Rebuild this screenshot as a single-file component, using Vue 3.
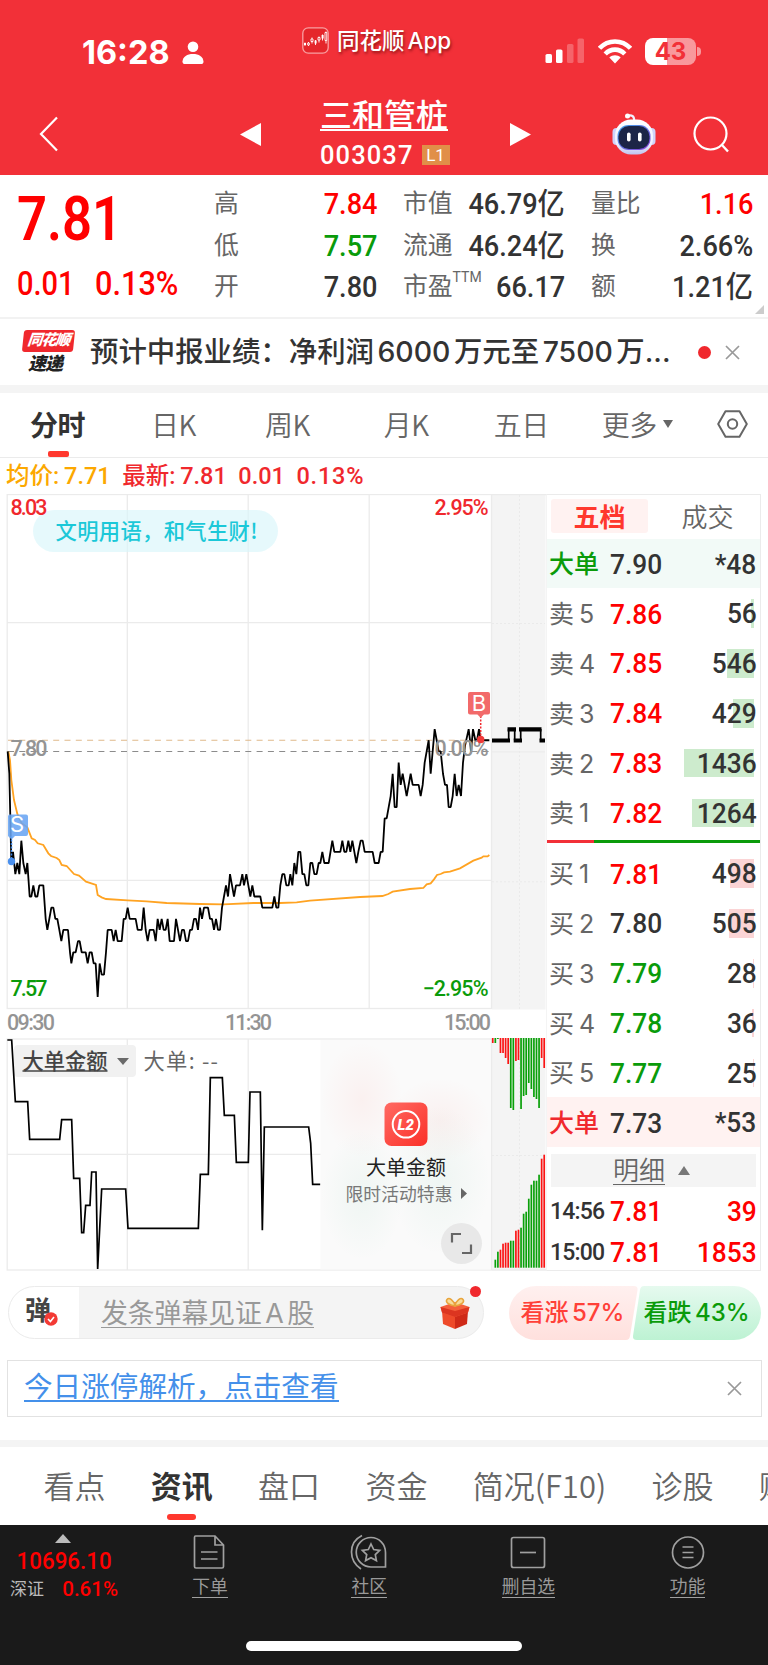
<template>
  <div class="phone">
    <header class="header">
      <div class="status-bar">
        <span class="clock">16:28</span>
        <svg class="person" width="22" height="24" viewBox="0 0 22 24">
          <circle cx="11" cy="5.8" r="5.3" fill="#fff" />
          <path d="M0.5 20.5C1 15.500 5 13 11 13s10 2.500 10.500 7.500c0 2-1 2.500-2.500 2.500H3c-1.500 0-2.500-.5-2.500-2.500z" fill="#fff" />
        </svg>
        <div class="app-badge">
          <svg width="27" height="27" viewBox="0 0 27 27">
            <rect x="0.8" y="0.8" width="25.400" height="25.400" rx="5.500" fill="#e5262b" stroke="#f9a0a2" stroke-width="1.300" />
            <g stroke="#fff" stroke-width="0.9" fill="none">
              <path d="M3 15.500v3M6.500 15v4M10 10.500v6M13.500 13v5M17 9.500v6M20.500 7.500v6M24 4.500v12" />
              <path d="M5.700 16h1.600v2H5.700zM9 12h2v2.500H9zM16 10.500h2v2.500h-2zM23 5.500h1.800v8H23z" fill="#e5262b" />
            </g>
            <path d="M2 16h2v2.300H2zM12.600 13.500h2v3h-2zM19.600 8h2v3.500h-2z" fill="#fff" />
          </svg>
          <span>同花顺 App</span>
        </div>
        <svg class="signal" width="40" height="26" viewBox="0 0 40 26">
          <rect x="0.500" y="16" width="6.500" height="9" rx="1.600" fill="#fff" />
          <rect x="11" y="11.500" width="6.500" height="13.500" rx="1.600" fill="#fff" />
          <rect x="22" y="6" width="6.500" height="19" rx="1.600" fill="#fff" opacity=".25" />
          <rect x="32.500" y="0.500" width="6.500" height="24.500" rx="1.600" fill="#fff" opacity=".25" />
        </svg>
        <svg class="wifi" width="34" height="25" viewBox="0 0 34 25">
          <g fill="none" stroke="#fff" stroke-width="4.600">
            <path d="M1.500 9.300C10 0.200 24 0.200 32.500 9.300" />
            <path d="M7.200 15C12.800 9.200 21.200 9.200 26.800 15" />
          </g>
          <path d="M11.300 18.600c3.200-3 8.200-3 11.400 0L17 24.500z" fill="#fff" />
        </svg>
        <div class="battery"><span>43</span></div>
      </div>

      <div class="title-bar">
        <svg class="back" width="20" height="36" viewBox="0 0 20 36">
          <path d="M18 1.500L2 18l16 16.500" fill="none" stroke="#fff" stroke-width="2.200" />
        </svg>
        <svg class="prev" width="21" height="23" viewBox="0 0 21 23"><path d="M21 0v23L0 11.500z" fill="#fff" /></svg>
        <div class="stock">
          <div class="stock-name">三和管桩</div>
          <div class="stock-code"><span>003037</span><i>L1</i></div>
        </div>
        <svg class="next" width="21" height="23" viewBox="0 0 21 23"><path d="M0 0v23l21-11.500z" fill="#fff" /></svg>
        <svg class="robot" width="44" height="42" viewBox="0 0 44 42">
          <defs>
            <linearGradient id="shell" x1="0" y1="0" x2="0" y2="1">
              <stop offset="0" stop-color="#fff" />
              <stop offset=".7" stop-color="#eef0ff" />
              <stop offset="1" stop-color="#bfc3ee" />
            </linearGradient>
            <linearGradient id="visor" x1="0" y1="0" x2="1" y2="1">
              <stop offset="0" stop-color="#3ea5e8" />
              <stop offset="1" stop-color="#8a3fd8" />
            </linearGradient>
          </defs>
          <path d="M16 2.500c4-.8 6.500.5 6.200 6" fill="none" stroke="#f1f1ff" stroke-width="2.200" />
          <circle cx="15.500" cy="3" r="2.500" fill="#fff" />
          <rect x="0.500" y="15" width="8" height="17" rx="4" fill="#cfd3fa" />
          <rect x="35.500" y="15" width="8" height="17" rx="4" fill="#cfd3fa" />
          <rect x="3" y="6.500" width="38" height="35" rx="16" fill="url(#shell)" />
          <rect x="5.500" y="12" width="33" height="25" rx="11" fill="url(#visor)" />
          <rect x="6.500" y="13" width="31" height="23" rx="10.500" fill="#1c2547" />
          <rect x="15" y="19.500" width="3.600" height="9" rx="1.800" fill="#fff" />
          <rect x="26" y="19.500" width="3.600" height="9" rx="1.800" fill="#fff" />
        </svg>
        <svg class="search" width="37" height="37" viewBox="0 0 37 37">
          <circle cx="17.500" cy="17.500" r="16" fill="none" stroke="#fff" stroke-width="2.200" />
          <path d="M28.500 28.500l6.500 7" stroke="#fff" stroke-width="2.400" />
        </svg>
      </div>
    </header>

    <section class="quote">
      <div class="price">
        <div class="last"><span>7.81</span></div>
        <div class="change"><span>0.01</span><span class="rate">0.13%</span></div>
      </div>
      <div class="stats">
        <template v-for="s in stats" :key="s.label">
          <span class="stat-label">{{ s.label }}<sup v-if="s.sup">{{ s.sup }}</sup></span>
          <span class="stat-value" :class="s.tone"><b>{{ s.value }}</b></span>
        </template>
      </div>
      <i class="corner"></i>
    </section>

    <section class="news">
      <div class="news-logo">
        <span class="logo-top">同花顺</span>
        <span class="logo-bottom">速递</span>
      </div>
      <span class="news-text">预计中报业绩：净利润 6000 万元至 7500 万...</span>
      <i class="news-dot"></i>
      <svg width="15" height="15" viewBox="0 0 15 15"><path d="M1 1l13 13M14 1L1 14" stroke="#999" stroke-width="1.700" /></svg>
    </section>

    <nav class="period-tabs">
      <span v-for="t in periods" :key="t" :class="{ active: t === '分时' }">{{ t }}</span>
      <i class="caret"></i>
      <svg class="hex" width="31" height="28" viewBox="0 0 31 28">
        <path d="M8.500 1.200h14L29.800 14l-7.300 12.800h-14L1.200 14z" fill="none" stroke="#666" stroke-width="2" stroke-linejoin="round" />
        <circle cx="15.500" cy="14" r="4.700" fill="none" stroke="#666" stroke-width="2" />
      </svg>
    </nav>

    <div class="legend">
      <span class="avg">均价: 7.71</span>
      <span>最新: 7.81</span>
      <span>0.01</span>
      <span class="rate">0.13%</span>
    </div>

    <main class="board">
      <svg class="chart" width="546" height="778" viewBox="0 494 546 778">
        <defs>
          <radialGradient id="glowRed"><stop offset="0" stop-color="#ff5a50" stop-opacity=".06" /><stop offset="1" stop-color="#ff5a50" stop-opacity="0" /></radialGradient>
          <radialGradient id="glowGreen"><stop offset="0" stop-color="#40b080" stop-opacity=".06" /><stop offset="1" stop-color="#40b080" stop-opacity="0" /></radialGradient>
          <linearGradient id="l2" x1="0" y1="0" x2="1" y2="1"><stop offset="0" stop-color="#ff6a63" /><stop offset="1" stop-color="#fb3028" /></linearGradient>
        </defs>

        <!-- grid -->
        <rect x="492" y="494" width="53.500" height="515.500" fill="#f4f4f4" />
        <rect x="492" y="1038" width="53.500" height="232" fill="#f4f4f4" />
        <g stroke="#ebebeb" stroke-width="1.300" fill="none">
          <rect x="7.200" y="494.500" width="484.300" height="514" />
          <rect x="7.200" y="1039" width="484.300" height="231" />
          <path d="M127.300 494.500V1008.500M248.200 494.500V1008.500M369.200 494.500V1008.500M7 622.600H491M7 880.400H491" />
          <path d="M127.300 1039V1270M248.200 1039V1270M7 1154.400H321" />
          <path d="M492 494.500H547M492 1270H547M492 751.800H545" />
        </g>
        <path d="M519.500 495V1009M492 623.500H545M492 881.800H545M519.500 1039V1269M492 1155.500H545" stroke="#eaeaea" stroke-dasharray="2 2" fill="none" />

        <!-- greeting bubble -->
        <rect x="33" y="510" width="245" height="42" rx="21" fill="#d8f6fa" fill-opacity=".65" />
        <text x="55.500" y="539.200" class="cjk" font-size="21.300" font-weight="500" fill="#1bc8d8" textLength="202">文明用语，和气生财!</text>

        <!-- reference levels -->
        <path d="M8 740.300H491" stroke="#dfb98a" stroke-width="1.100" stroke-dasharray="6 5.300" />
        <path d="M8 751.500H491" stroke="#8c8c8c" stroke-width="1.100" stroke-dasharray="6 5.300" />

        <polyline :points="avgPoints" fill="none" stroke="#ffa322" stroke-width="1.800" />
        <polyline :points="pricePoints" fill="none" stroke="#000" stroke-width="1.800" stroke-linejoin="bevel" />
        <path d="M508.700 729V740.300M514.700 729V740.300M520.700 729V740.300M540.700 729V740.300" stroke="#000" stroke-width="1.700" />
        <path d="M492 740.500H510M507.500 729.300H516M513.700 740.500H522M519 729.300H541.500M539.500 740.500H545" stroke="#000" stroke-width="4.200" />

        <g class="num" font-size="21.500">
          <text x="10.500" y="514.600" fill="#f0282d" textLength="37">8.03</text>
          <text x="434.500" y="514.600" fill="#f0282d" textLength="54">2.95%</text>
          <text x="10.500" y="755.800" fill="#949494" textLength="37">7.80</text>
          <text x="434.500" y="755.800" fill="#949494" textLength="54">0.00%</text>
          <text x="10.500" y="996.300" fill="#0a9b0a" textLength="37">7.57</text>
          <text x="422.500" y="996.300" fill="#0a9b0a" textLength="66">−2.95%</text>
        </g>
        <g class="num time" font-size="21.500" fill="#949494">
          <text x="7" y="1030.300" textLength="48">09:30</text>
          <text x="225" y="1030.300" textLength="47">11:30</text>
          <text x="444" y="1030.300" textLength="47">15:00</text>
        </g>

        <!-- trade marks -->
        <path d="M11.500 836V861" stroke="#3d86e8" stroke-width="1.500" stroke-dasharray="2 1.500" />
        <circle cx="11.500" cy="861.500" r="3.700" fill="#4a90ee" />
        <path d="M9 814.500h17q2 0 2 2v17.500q0 2-2 2H15l-3.500 3.500L8 836V816z" fill="#69a5f2" fill-opacity=".88" />
        <text x="10" y="832.300" class="mark">S</text>
        <path d="M480.700 716V739" stroke="#f0282d" stroke-width="1.500" stroke-dasharray="2 1.500" />
        <circle cx="480.700" cy="739.500" r="3.700" fill="#f03a3a" />
        <path d="M470 692h18q2 0 2 2v18.500q0 2-2 2h-4l-3.300 3.300-3.300-3.300H470q-2 0-2-2V694q0-2 2-2z" fill="#f26a6a" />
        <text x="471.800" y="710.800" class="mark">B</text>

        <!-- big order panel -->
        <rect x="14" y="1045" width="122" height="32" rx="4" fill="#f1f1f1" />
        <text x="22.500" y="1069" class="cjk" font-size="21.300" font-weight="500" fill="#444" textLength="85">大单金额</text>
        <path d="M22.500 1071H107.500" stroke="#444" stroke-width="1.500" />
        <path d="M117 1058h12l-6 7z" fill="#6a6a6a" />
        <text x="143.500" y="1069" class="cjk" font-size="21.300" fill="#666" textLength="74.500">大单: --</text>
        <polyline :points="flowPoints" fill="none" stroke="#000" stroke-width="1.700" />

        <rect x="320.500" y="1040" width="170.500" height="229.500" fill="#fafafa" />
        <ellipse cx="362" cy="1100" rx="41" ry="58" fill="url(#glowRed)" />
        <ellipse cx="440" cy="1120" rx="50" ry="42" fill="url(#glowRed)" />
        <ellipse cx="362" cy="1195" rx="41" ry="65" fill="url(#glowGreen)" />
        <ellipse cx="440" cy="1180" rx="50" ry="75" fill="url(#glowGreen)" />
        <rect x="384.500" y="1102.500" width="43" height="43.500" rx="7" fill="url(#l2)" />
        <circle cx="406" cy="1124.300" r="13.300" fill="none" stroke="#fff" stroke-width="2" />
        <text x="397.500" y="1130" class="l2">L2</text>
        <text x="366" y="1174.800" class="cjk" font-size="20" fill="#222" textLength="80">大单金额</text>
        <text x="345.500" y="1201" class="cjk" font-size="17.800" fill="#777" textLength="107">限时活动特惠</text>
        <path d="M461 1188v11l6-5.500z" fill="#666" />
        <circle cx="461.500" cy="1243.500" r="20.500" fill="#e8e8e8" />
        <path d="M452 1242.500v-8.500h9M471 1244.500v8.500h-9" fill="none" stroke="#666" stroke-width="2.200" />

        <!-- closing auction bars -->
        <template v-for="(b, i) in bars" :key="i">
          <rect :x="491.900 + i * 2.573" y="1038" width="1.700" :height="b[1]" :fill="b[0] ? '#fb1414' : '#0aa00a'" />
          <rect :x="491.900 + i * 2.573" :y="1267.700 - b[2]" width="1.700" :height="b[2]" :fill="b[0] ? '#fb1414' : '#0aa00a'" />
        </template>
      </svg>

      <aside class="book">
        <div class="book-tabs"><span class="on">五档</span><span>成交</span></div>
        <div v-for="r in sells" :key="r.name" class="row" :class="{ 'big-sell': r.big }">
          <span class="name">{{ r.name }}</span>
          <span class="num-cell" :class="r.tone">{{ r.price }}</span>
          <span class="vol"><i :style="{ width: r.bar + 'px' }"></i><em>{{ r.vol }}</em></span>
        </div>
        <div class="ratio"><i></i></div>
        <div v-for="r in buys" :key="r.name" class="row buy" :class="{ 'big-buy': r.big }">
          <span class="name">{{ r.name }}</span>
          <span class="num-cell" :class="r.tone">{{ r.price }}</span>
          <span class="vol"><i :style="{ width: r.bar + 'px' }"></i><em>{{ r.vol }}</em></span>
        </div>
        <div class="detail"><span>明细</span><i></i></div>
        <div v-for="d in deals" :key="d.time" class="row deal">
          <span class="time-cell">{{ d.time }}</span>
          <span class="num-cell red">{{ d.price }}</span>
          <span class="vol red"><em>{{ d.vol }}</em></span>
        </div>
      </aside>
    </main>

    <section class="comment">
      <div class="comment-box">
        <div class="dan">
          弹
          <svg class="check" width="14" height="14" viewBox="0 0 14 14">
            <circle cx="7" cy="7" r="6.700" fill="#f33a34" />
            <path d="M4 7l2.400 2.500L10 5" fill="none" stroke="#fff" stroke-width="1.600" />
          </svg>
        </div>
        <span class="placeholder">发条弹幕见证 A 股</span>
        <svg class="gift" width="30" height="32" viewBox="0 0 30 32">
          <path d="M2 14l13 4.500V32L3 27z" fill="#ee4a2a" />
          <path d="M28 14l-13 4.500V32l12-5z" fill="#cf2a18" />
          <path d="M0.500 10L15 5l14.500 5L28 15.500 15 20 2 15.500z" fill="#f4603c" />
          <path d="M0.500 10L15 14l14.500-4L28 15.500 15 20 2 15.500z" fill="#dc3520" />
          <path d="M15 9C9 8 5 5 7 2.500S14 3 15 9zM15 9c6-1 10-4 8-6.500S16 3 15 9z" fill="#f8dc9a" stroke="#e8a43c" stroke-width="1.600" />
        </svg>
        <i class="gift-dot"></i>
      </div>
      <div class="vote">
        <svg width="252" height="54" viewBox="0 0 252 54">
          <defs>
            <linearGradient id="up" x1="0" y1="0" x2="0" y2="1"><stop offset="0" stop-color="#fff0ef" /><stop offset="1" stop-color="#ffe0dd" /></linearGradient>
            <linearGradient id="down" x1="0" y1="0" x2="0" y2="1"><stop offset="0" stop-color="#e6faef" /><stop offset="1" stop-color="#bdf2d3" /></linearGradient>
          </defs>
          <path d="M27 0H125q4 0 3.500 4L121 50q-.6 4-4 4H27a27 27 0 010-54z" fill="url(#up)" />
          <path d="M135 0h90a27 27 0 010 54H128q-4.500 0-4-4l7-46q.6-4 4-4z" fill="url(#down)" />
        </svg>
        <span class="bull">看涨 57%</span>
        <span class="bear">看跌 43%</span>
      </div>
    </section>

    <section class="notice">
      <a>今日涨停解析，点击查看</a>
      <svg width="15" height="15" viewBox="0 0 15 15"><path d="M1 1l13 13M14 1L1 14" stroke="#999" stroke-width="1.700" /></svg>
    </section>

    <nav class="info-tabs">
      <span v-for="t in infos" :key="t" :class="{ active: t === '资讯' }">{{ t }}</span>
    </nav>

    <footer class="footer">
      <div class="index">
        <i></i>
        <b>10696.10</b>
        <p><span>深证</span><em>0.61%</em></p>
      </div>
      <div class="tool">
        <svg width="36" height="36" viewBox="0 0 36 36">
          <path d="M3.500 2h19.500l8.500 9v21.500q0 1.500-1.500 1.500h-26q-1.500 0-1.500-1.500v-29q0-1.500 1-1.500zM23 2v9h8.500M9 18h16.500M9 25h16.500" />
        </svg>
        <span>下单</span>
      </div>
      <div class="tool">
        <svg width="38" height="36" viewBox="0 0 38 36">
          <path d="M12 1.500C5 5 1.500 11 1.500 18S5 31 11 35" />
          <path d="M21 3.500a14.500 14.500 0 1 0 0 29.500h14.500V18.500C35.500 10 29 3.500 21 3.500z" />
          <path d="M21 10l2.700 5.500 6 .9-4.400 4.200 1.100 6L21 23.700l-5.400 2.900 1.100-6-4.400-4.200 6-.9z" />
        </svg>
        <span>社区</span>
      </div>
      <div class="tool">
        <svg width="36" height="36" viewBox="0 0 36 36"><rect x="1.500" y="3.500" width="33" height="30" rx="2" /><path d="M10 18.500h16" /></svg>
        <span>删自选</span>
      </div>
      <div class="tool">
        <svg width="36" height="36" viewBox="0 0 36 36"><circle cx="18" cy="18.500" r="15.500" /><path d="M12.500 13h11M12.500 18.500h11M12.500 23.500h11" /></svg>
        <span>功能</span>
      </div>
      <i class="home-bar"></i>
    </footer>
  </div>
</template>

<script setup>
const stats = [
  { label: '高', value: '7.84', tone: 'red' },
  { label: '市值', value: '46.79亿' },
  { label: '量比', value: '1.16', tone: 'red' },
  { label: '低', value: '7.57', tone: 'green' },
  { label: '流通', value: '46.24亿' },
  { label: '换', value: '2.66%' },
  { label: '开', value: '7.80' },
  { label: '市盈', sup: 'TTM', value: '66.17' },
  { label: '额', value: '1.21亿' }
]

const periods = ['分时', '日K', '周K', '月K', '五日', '更多']
const infos = ['看点', '资讯', '盘口', '资金', '简况(F10)', '诊股', '财务']

const sells = [
  { name: '大单', price: '7.90', vol: '*48', bar: 0, big: true },
  { name: '卖 5', price: '7.86', vol: '56', bar: 3, tone: 'red' },
  { name: '卖 4', price: '7.85', vol: '546', bar: 27, tone: 'red' },
  { name: '卖 3', price: '7.84', vol: '429', bar: 21, tone: 'red' },
  { name: '卖 2', price: '7.83', vol: '1436', bar: 70, tone: 'red' },
  { name: '卖 1', price: '7.82', vol: '1264', bar: 62, tone: 'red' }
]
const buys = [
  { name: '买 1', price: '7.81', vol: '498', bar: 24, tone: 'red' },
  { name: '买 2', price: '7.80', vol: '505', bar: 25 },
  { name: '买 3', price: '7.79', vol: '28', bar: 1, tone: 'green' },
  { name: '买 4', price: '7.78', vol: '36', bar: 2, tone: 'green' },
  { name: '买 5', price: '7.77', vol: '25', bar: 1, tone: 'green' },
  { name: '大单', price: '7.73', vol: '*53', bar: 0, big: true }
]
const deals = [
  { time: '14:56', price: '7.81', vol: '39' },
  { time: '15:00', price: '7.81', vol: '1853' }
]

// [x, 低于昨收的分数]，x 为三分之一像素
const morning = [
  [23, 0], [28, 2], [34, 10], [39, 9], [46, 11], [52, 10], [58, 11], [64, 8], [70, 10], [77, 11], [82, 10], [89, 13],
  [94, 13], [100, 12], [106, 13], [112, 13], [118, 12], [130, 12], [137, 15], [142, 16], [154, 14], [160, 14], [166, 15],
  [172, 15], [178, 16], [184, 17], [190, 16], [204, 16], [210, 18], [214, 19], [220, 18], [227, 18], [234, 17], [239, 17],
  [245, 18], [257, 18], [263, 19], [269, 18], [275, 18], [281, 19], [287, 19], [293, 22], [299, 19], [305, 20], [312, 20],
  [318, 18], [323, 16], [335, 16], [341, 17], [347, 16], [353, 17], [365, 17], [371, 15], [377, 15], [383, 14], [389, 15],
  [407, 15], [413, 16], [425, 16], [431, 14], [437, 16], [443, 17], [449, 16], [461, 16], [467, 17], [473, 15], [479, 16],
  [485, 15], [491, 16], [497, 16], [503, 15], [509, 17], [522, 17], [528, 15], [534, 16], [540, 17], [546, 16], [552, 16],
  [558, 17], [564, 17], [570, 16], [576, 16], [582, 15], [588, 15], [594, 16], [600, 14], [606, 15], [612, 14], [624, 14],
  [630, 15], [636, 15], [642, 16], [648, 15], [654, 16], [660, 16], [666, 14], [672, 13], [678, 12], [684, 13], [690, 11],
  [696, 12], [702, 13], [708, 12], [720, 12], [727, 11], [732, 12], [739, 11]
]
const afternoon = [
  [85, 12], [91, 13], [97, 12], [103, 13], [121, 13], [127, 14], [157, 14], [163, 13], [169, 14], [175, 14], [181, 12],
  [187, 11], [193, 11], [199, 12], [206, 12], [211, 11], [217, 12], [223, 10], [229, 11], [235, 9], [241, 9], [247, 11],
  [253, 11], [259, 12], [265, 12], [271, 10], [277, 10], [283, 11], [290, 11], [296, 10], [301, 10], [307, 9], [313, 10],
  [326, 10], [337, 8], [343, 9], [361, 9], [367, 8], [373, 9], [379, 9], [385, 8], [391, 9], [397, 8], [409, 10],
  [415, 9], [422, 8], [428, 8], [434, 9], [458, 9], [464, 10], [476, 10], [482, 9], [488, 9], [494, 6], [500, 6],
  [512, 4], [518, 2], [524, 5], [530, 5], [536, 1], [542, 3], [548, 2], [560, 4], [572, 2], [578, 3], [596, 3],
  [602, 4], [608, 3], [614, 1], [626, -1], [632, 2], [644, -2], [650, -1], [656, 0], [662, 0], [669, 2], [675, 3],
  [681, 3], [686, 5], [692, 5], [698, 4], [704, 2], [710, 4], [716, 3], [723, 4], [729, 1], [735, -0.5], [746, -2],
  [750, -1], [753, 0], [759, -2], [766, -1], [771, -1], [777, -2], [782, -1], [808, -1]
]
const pricePoints = morning
  .concat(afternoon.map(([x, k]) => [x + 660, k]))
  .map(([x, k]) => `${x / 3},${751.4 + k * 11.16}`)
  .join(' ')

const avg = [
  [25, 35], [30, 60], [34, 120], [42, 180], [52, 222], [65, 250], [82, 262], [95, 295], [105, 300], [113, 310], [130, 315],
  [145, 340], [153, 348], [170, 354], [178, 360], [185, 375], [200, 378], [222, 402], [237, 407], [258, 425], [288, 435],
  [293, 465], [305, 472], [318, 477], [383, 481], [440, 484], [500, 489], [600, 492], [670, 493], [760, 489], [840, 489],
  [890, 487], [930, 482], [1080, 471], [1147, 468], [1165, 462], [1178, 455], [1230, 447], [1270, 444], [1280, 433],
  [1292, 430], [1302, 418], [1311, 405], [1322, 402], [1332, 397], [1350, 395], [1380, 385], [1420, 362], [1445, 353],
  [1450, 349], [1463, 349], [1468, 345]
]
const avgPoints = avg.map(([x, y]) => `${x / 3},${740 + y / 3}`).join(' ')

const flow = [
  [22, 30], [35, 30], [46, 215], [83, 215], [89, 328], [179, 328], [185, 269], [215, 269], [221, 445], [239, 445],
  [245, 608], [251, 608], [257, 526], [270, 526], [275, 426], [288, 426], [293, 717], [305, 477], [377, 477], [384, 595],
  [595, 595], [601, 433], [625, 433], [631, 143], [667, 143], [673, 256], [703, 256], [709, 397], [745, 397], [750, 186],
  [781, 186], [787, 601], [793, 291], [926, 291], [932, 340], [938, 463], [961, 463]
]
const flowPoints = flow.map(([x, y]) => `${x / 3},${1030 + y / 3}`).join(' ')

// [红=1/绿=0, 上方柱高, 下方柱高]
const bars = [
  [1, 5, 0], [0, 5, 8], [0, 1, 16], [1, 15, 18], [1, 15, 24], [1, 20, 25], [1, 26, 25], [0, 70, 27], [0, 72, 27],
  [1, 23, 37], [1, 22, 38], [0, 71, 40], [0, 58, 54], [0, 57, 56], [0, 45, 69], [0, 51, 83], [0, 59, 87], [0, 61, 87],
  [0, 70, 93], [1, 20, 109], [1, 30, 113]
]
</script>

<style>
body {
  background: #fff;
}
</style>

<style scoped>
* {
  box-sizing: border-box;
}

.phone {
  width: 768px;
  height: 1665px;
  overflow: hidden;
  background: #fff;
  color: #333;
  font-family: Roboto, "Noto Sans CJK SC", sans-serif;
}

i,
em {
  font-style: normal;
}

svg {
  display: block;
  flex: none;
}

span,
b {
  white-space: nowrap;
}

.red {
  color: #ff0000;
}

.green {
  color: #0a9b0a;
}

/* 顶部 */
.header {
  height: 174.5px;
  background: #f23038;
  color: #fff;
}

.status-bar {
  height: 90px;
  padding-left: 82px;
  display: flex;
  align-items: flex-start;
}

.clock {
  width: 100px;
  margin-top: 34px;
  font: 700 32.5px/38px Inter, sans-serif;
}

.person {
  margin-top: 41px;
}

.app-badge {
  width: 243px;
  margin: 27px 0 0 98px;
  display: flex;
  align-items: center;
  gap: 8px;
  font: 500 22.5px/27px Inter, "Noto Sans CJK SC", sans-serif;
  word-spacing: -3px;
  text-shadow: 1px 2px 3px rgba(80, 0, 0, 0.6);
}

.signal {
  margin-top: 38px;
}

.wifi {
  margin: 39px 0 0 13px;
}

.battery {
  position: relative;
  width: 51px;
  height: 27px;
  margin: 38px 0 0 13px;
  border-radius: 8px;
  background: linear-gradient(90deg, #fff 22px, rgba(255, 255, 255, 0.5) 22px);
  color: #f23038;
  font: 700 24px/27px Inter, sans-serif;
  text-align: center;
}

.battery::after {
  content: "";
  position: absolute;
  left: 52px;
  top: 9px;
  width: 4px;
  height: 9px;
  border-radius: 0 4px 4px 0;
  background: rgba(255, 255, 255, 0.5);
}

.title-bar {
  height: 84px;
  padding-left: 39px;
  display: flex;
  align-items: flex-start;
}

.back {
  margin-top: 26px;
}

.prev {
  margin: 32.500px 0 0 181px;
}

.stock {
  width: 249px;
  padding: 10px 0 0 59px;
}

.stock-name {
  width: 128px;
  height: 31px;
  border-bottom: 2px solid #fff;
  font-size: 32px;
  font-weight: 500;
  line-height: 32px;
}

.stock-code {
  margin-top: 11px;
  display: flex;
  align-items: center;
  height: 26px;
  font-size: 25.500px;
  font-weight: 500;
  letter-spacing: 1.1px;
}

.stock-code i {
  width: 28px;
  height: 20px;
  margin-left: 8px;
  background: #e18f48;
  font-size: 17px;
  font-weight: 400;
  line-height: 21px;
  text-align: center;
  letter-spacing: 0;
}

.next {
  margin-top: 32.500px;
}

.robot {
  margin: 23px 0 0 81px;
}

.search {
  margin: 26px 0 0 37px;
}

/* 报价 */
.quote {
  position: relative;
  height: 144.5px;
  border-bottom: 2px solid #f2f2f2;
  display: flex;
}

.price {
  width: 214px;
  padding: 13px 0 0 17px;
  color: #ff0000;
}

.last {
  height: 65px;
}

.last span {
  display: inline-block;
  font-size: 60.5px;
  font-weight: 600;
  line-height: 64px;
  transform: scaleX(0.87);
  transform-origin: left;
}

.change {
  display: flex;
  gap: 13px;
  margin-top: 12px;
  font-size: 33px;
  font-weight: 500;
  line-height: 38px;
}

.change span {
  transform: scaleX(0.88);
  transform-origin: left;
}

.change .rate {
  transform: scaleX(0.93);
}

.stats {
  height: 126px;
  padding-top: 9px;
  display: grid;
  grid-template-columns: 59px 104px 76px 112px 76px 112px;
  grid-template-rows: repeat(3, 41.5px);
  align-items: center;
}

.stats .stat-label:nth-child(6n + 3),
.stats .stat-label:nth-child(6n + 5) {
  padding-left: 26px;
}

.stat-label {
  color: #666;
  font-size: 24.8px;
  line-height: 36px;
}

.stat-label sup {
  position: relative;
  top: -4px;
  font-size: 14px;
  line-height: 1;
}

.stat-value {
  text-align: right;
}

.stat-value b {
  display: inline-block;
  font-size: 29.5px;
  font-weight: 500;
  line-height: 36px;
  transform: scaleX(0.92);
  transform-origin: right;
}

.corner {
  position: absolute;
  right: 4px;
  bottom: 3px;
  border-left: 9px solid transparent;
  border-bottom: 9px solid #ccc;
}

/* 快讯 */
.news {
  height: 66px;
  padding-left: 22px;
  display: flex;
  align-items: center;
}

.news-logo {
  position: relative;
  width: 68px;
  height: 44px;
  font-weight: 900;
  font-style: italic;
  letter-spacing: -1px;
}

.logo-top {
  display: block;
  width: 51px;
  height: 22px;
  margin-left: 1px;
  border-radius: 3px;
  background: #f0282d;
  color: #fff;
  font-size: 15px;
  line-height: 21px;
  text-align: center;
  transform: skewX(-6deg);
}

.logo-bottom {
  display: block;
  padding-left: 6px;
  color: #222;
  font-size: 18px;
  line-height: 23px;
}

.news-text {
  width: 608px;
  font-family: Inter, "Noto Sans CJK SC", sans-serif;
  font-size: 28.4px;
  font-weight: 500;
  line-height: 40px;
  word-spacing: -4px;
}

.news-dot {
  width: 13px;
  height: 13px;
  margin-right: 14px;
  border-radius: 50%;
  background: #f0282d;
}

/* 周期 */
.period-tabs {
  height: 73px;
  border-top: 8px solid #f4f4f4;
  border-bottom: 1.5px solid #ebebeb;
  padding: 0 0 2px 30px;
  display: flex;
  align-items: center;
  color: #666;
  font: 350 28px/40px "Noto Sans CJK SC", sans-serif;
}

.period-tabs span {
  margin-right: 66px;
  letter-spacing: -0.5px;
}

.period-tabs span:nth-child(2) {
  margin-right: 69px;
}

.period-tabs span:nth-child(3) {
  margin-right: 74px;
}

.period-tabs span:nth-child(4) {
  margin-right: 65px;
}

.period-tabs span:nth-child(5) {
  margin-right: 53px;
}

.period-tabs span:nth-child(6) {
  margin-right: 6px;
}

.period-tabs .active {
  position: relative;
  color: #333;
  font-weight: 700;
}

.period-tabs .active::after {
  content: "";
  position: absolute;
  left: 18px;
  bottom: -13px;
  width: 21px;
  height: 6px;
  border-radius: 2px;
  background: #ff382e;
}

.caret {
  border: 5.5px solid transparent;
  border-top: 8px solid #666;
  border-bottom: 0;
}

.hex {
  margin-left: auto;
  margin-right: 20.500px;
}

.legend {
  height: 36px;
  padding-left: 6px;
  display: flex;
  gap: 11.5px;
  color: #f0282d;
  font-size: 23.500px;
  font-weight: 500;
  line-height: 37px;
  word-spacing: -1px;
}

.legend .avg {
  color: #fca800;
}

.legend .rate {
  letter-spacing: 0.8px;
}

/* 图表 */
.board {
  height: 777px;
  display: flex;
}

.cjk {
  font-family: "Noto Sans CJK SC", sans-serif;
}

.num {
  font-family: Roboto, sans-serif;
  font-weight: 500;
}

.mark {
  font: 400 22px Inter, sans-serif;
  fill: #fff;
}

.l2 {
  font: italic 900 15px Roboto, sans-serif;
  fill: #fff;
}

.book {
  width: 214.5px;
  height: 776.5px;
  border: 1.5px solid #ebebeb;
  border-left-color: #f4f4f4;
}

.book-tabs {
  height: 43.500px;
  padding: 3.500px 0 0 4px;
  display: flex;
  font: 350 26px/33px "Noto Sans CJK SC", sans-serif;
  color: #666;
  text-align: center;
}

.book-tabs span {
  width: 97px;
  height: 34px;
  border-radius: 3px;
}

.book-tabs .on {
  margin-right: 11px;
  background: #fff2f1;
  color: #ff382e;
  font-weight: 700;
}

.row {
  height: 49.8px;
  padding: 1px 3px 0 2px;
  display: flex;
  align-items: center;
}

.name {
  width: 60.500px;
  padding-top: 1px;
  color: #666;
  font-family: Inter, "Noto Sans CJK SC", sans-serif;
  font-size: 25px;
  line-height: 40px;
  word-spacing: -2px;
}

.num-cell {
  padding-top: 1px;
  font-size: 28px;
  font-weight: 500;
  transform: scaleX(0.94);
  transform-origin: left;
}

.vol {
  position: relative;
  flex: 1;
  height: 28.500px;
  font-size: 28px;
  font-weight: 500;
  line-height: 30px;
  text-align: right;
}

.vol em {
  position: relative;
  display: inline-block;
  transform: scaleX(0.94);
  transform-origin: right;
}

.vol i {
  position: absolute;
  right: 3px;
  top: 0;
  height: 28.500px;
  background: #cdebcd;
}

.buy .vol i {
  background: #fbd4d5;
}

.big-sell {
  background: #f2faf7;
}

.big-buy {
  background: #fff2f1;
}

.big-sell .name {
  color: #0a9b0a;
  font-weight: 500;
}

.big-buy .name {
  color: #f0282d;
  font-weight: 500;
}

.ratio {
  height: 3.500px;
  margin: 2.500px 0 5px;
  background: #0a9b0a;
}

.ratio i {
  display: block;
  width: 47px;
  height: 100%;
  background: #f23038;
}

.detail {
  height: 32.500px;
  margin: 7px 4px 4px;
  display: flex;
  align-items: center;
  padding-left: 62px;
  background: #f4f4f4;
  color: #666;
  font: 350 26px/26px "Noto Sans CJK SC", sans-serif;
}

.detail span {
  height: 29px;
  border-bottom: 1.5px solid #666;
}

.detail i {
  margin-left: 13px;
  border: 6px solid transparent;
  border-bottom: 9px solid #777;
  border-top: 0;
}

.deal {
  height: 41px;
  padding-top: 0;
}

.time-cell {
  width: 60.500px;
  padding-left: 1px;
  font-size: 23px;
  font-weight: 500;
  letter-spacing: -0.8px;
}

/* 弹幕 */
.comment {
  height: 88.500px;
  padding: 14.500px 8px 0;
  display: flex;
  justify-content: space-between;
}

.comment-box {
  position: relative;
  width: 476px;
  height: 53.500px;
  border: 1.5px solid #ebebeb;
  border-radius: 27px;
  background: linear-gradient(90deg, #fff 70px, #f4f4f4 70px);
  display: flex;
  align-items: center;
}

.dan {
  position: relative;
  width: 92px;
  padding: 0 0 2px 16px;
  color: #444;
  font-size: 26px;
  font-weight: 700;
  line-height: 38px;
}

.check {
  position: absolute;
  left: 35px;
  top: 20px;
}

.placeholder {
  height: 31px;
  margin-top: 1px;
  border-bottom: 1.5px solid #999;
  color: #999;
  font-family: Inter, "Noto Sans CJK SC", sans-serif;
  font-size: 26.8px;
  line-height: 32px;
  word-spacing: -4px;
}

.gift {
  position: absolute;
  left: 431px;
  top: 10px;
}

.gift-dot {
  position: absolute;
  left: 461px;
  top: -1px;
  width: 11px;
  height: 11px;
  border-radius: 50%;
  background: #f0282d;
}

.vote {
  position: relative;
  width: 251.500px;
  font-family: Inter, "Noto Sans CJK SC", sans-serif;
  font-size: 24px;
  font-weight: 500;
  line-height: 54px;
  word-spacing: -3px;
}

.vote span {
  position: absolute;
  top: 0;
}

.bull {
  left: 12px;
  color: #ff4038;
}

.bear {
  left: 135px;
  color: #0a9b0a;
}

.notice {
  height: 57.500px;
  margin: 0 6.500px;
  padding: 0 19px 0 16.500px;
  border: 1.5px solid #e2e2e2;
  display: flex;
  align-items: center;
  justify-content: space-between;
}

.notice a {
  height: 29px;
  margin-top: -1px;
  border-bottom: 2px solid #4490ea;
  color: #4490ea;
  font-size: 28.600px;
  line-height: 29px;
}

/* 资讯 */
.info-tabs {
  height: 85px;
  margin-top: 23px;
  padding-left: 43.500px;
  border-top: 7px solid #f4f4f4;
  display: flex;
  gap: 45.300px;
  color: #666;
  font: 350 31px/75px "Noto Sans CJK SC", sans-serif;
}

.info-tabs .active {
  position: relative;
  color: #333;
  font-weight: 700;
}

.info-tabs .active::after {
  content: "";
  position: absolute;
  left: 16.500px;
  top: 67px;
  width: 28.500px;
  height: 6px;
  border-radius: 3px;
  background: #ff382e;
}

.footer {
  position: relative;
  height: 141px;
  padding-top: 9px;
  background: #1a1a1a;
  display: flex;
  color: #999;
}

.index {
  width: 128px;
  margin-right: 2.500px;
  display: flex;
  flex-direction: column;
  align-items: center;
}

.index i {
  margin-right: 2px;
  border: 8px solid transparent;
  border-bottom: 9px solid #bbb;
  border-top: 0;
}

.index b {
  margin-top: 4px;
  color: #ff0000;
  font-size: 24px;
  font-weight: 500;
  line-height: 28px;
  transform: scaleX(0.93);
}

.index p {
  margin: 0;
  width: 108px;
  display: flex;
  justify-content: space-between;
  font-size: 17px;
  line-height: 29px;
  color: #bbb;
}

.index em {
  color: #ff0000;
  font-size: 20.500px;
  font-weight: 500;
}

.tool {
  width: 159.200px;
  display: flex;
  flex-direction: column;
  align-items: center;
}

.tool svg {
  fill: none;
  stroke: #a0a0a0;
  stroke-width: 1.700;
}

.tool span {
  height: 20px;
  margin-top: 7.500px;
  border-bottom: 1.5px solid #a0a0a0;
  font-size: 17.800px;
  line-height: 18px;
}

.home-bar {
  position: absolute;
  left: 246px;
  top: 115.500px;
  width: 276px;
  height: 10px;
  border-radius: 5px;
  background: #fff;
}
</style>
